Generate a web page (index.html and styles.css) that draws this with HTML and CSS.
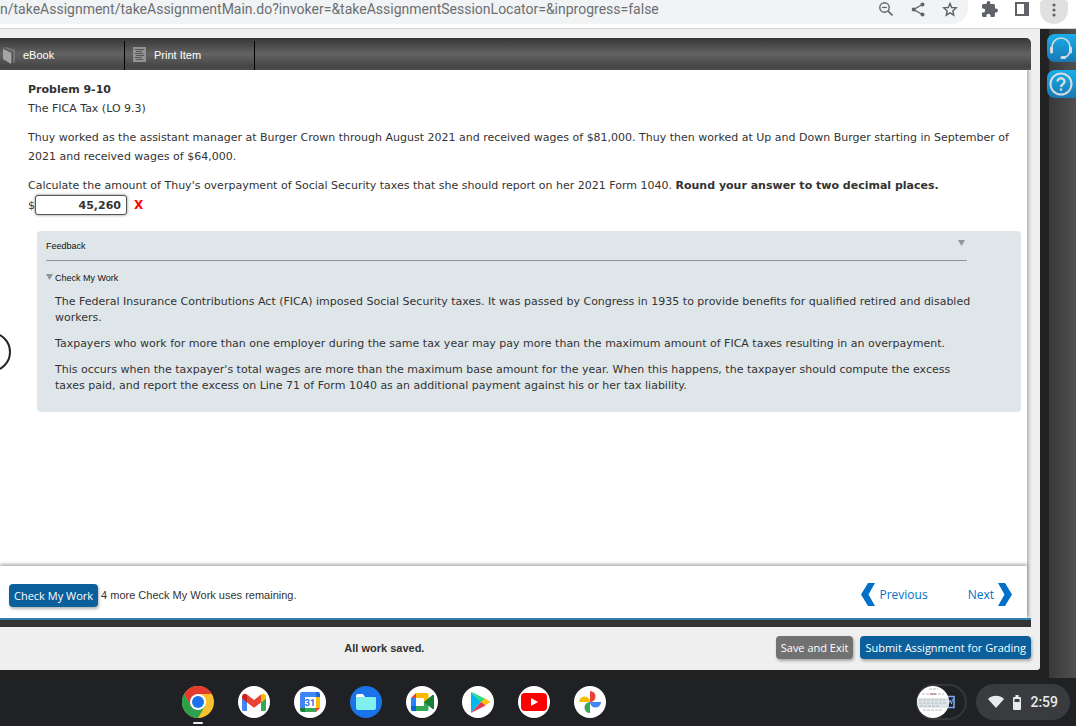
FILE: index.html
```html
<!DOCTYPE html>
<html lang="en">
<head>
    <meta charset="UTF-8">
    <meta name="viewport" content="width=device-width, initial-scale=1.0">
    <title>Problem 9-10</title>
    <link rel="stylesheet" href="styles.css">
</head>
<body>
    <header class="browser-bar">
        <div class="address">
            <input type="text" class="url" aria-label="Address" value="n/takeAssignment/takeAssignmentMain.do?invoker=&amp;takeAssignmentSessionLocator=&amp;inprogress=false">
            <button type="button" class="icon-button" aria-label="Zoom">
                <svg width="16" height="16" viewBox="0 0 16 16" fill="none" stroke="#5f6368"><circle cx="6.5" cy="6.5" r="4.7" stroke-width="1.4"/><path d="M10 10l4.500 4.500" stroke-width="1.700"/><path d="M4 6.500h5" stroke-width="1.200"/></svg>
            </button>
            <button type="button" class="icon-button" aria-label="Share">
                <svg width="16" height="16" viewBox="0 0 16 16" fill="#5f6368"><path d="M12.500 3.500L3.500 8.500l9 5" fill="none" stroke="#5f6368" stroke-width="1.400"/><circle cx="12.500" cy="3.500" r="2"/><circle cx="3.700" cy="8.500" r="2"/><circle cx="12.500" cy="13.500" r="2"/></svg>
            </button>
            <button type="button" class="icon-button" aria-label="Bookmark">
                <svg width="16" height="16" viewBox="0 0 16 16" fill="none" stroke="#5f6368" stroke-width="1.400"><path d="M8 2.500l1.700 4 4.500.4-3.400 3 1 4.300L8 11.900l-3.800 2.300 1-4.300-3.400-3 4.500-.4z"/></svg>
            </button>
        </div>
        <div class="browser-actions">
            <button type="button" class="icon-button" aria-label="Extensions">
                <svg width="16" height="16" viewBox="2 1 21 21" fill="#5f6368"><path d="M20.500 11H19V7c0-1.100-.9-2-2-2h-4V3.500a2.500 2.500 0 0 0-5 0V5H4c-1.100 0-2 .9-2 2v3.800h1.500c1.490 0 2.700 1.210 2.700 2.700s-1.210 2.700-2.700 2.700H2V20c0 1.100.9 2 2 2h3.800v-1.500c0-1.490 1.210-2.700 2.700-2.700s2.700 1.210 2.700 2.700V22H17c1.100 0 2-.9 2-2v-4h1.500a2.500 2.500 0 0 0 0-5z"/></svg>
            </button>
            <button type="button" class="icon-button" aria-label="Side panel">
                <svg width="16" height="16" viewBox="0 0 16 16"><path d="M1 1h14v14H1z" fill="#5f6368"/><path d="M3 3h7v10H3z" fill="#fff"/></svg>
            </button>
            <button type="button" class="icon-button menu-button" aria-label="Menu">
                <svg width="16" height="16" viewBox="0 0 16 16" fill="#5f6368"><circle cx="8" cy="4" r="1.600"/><circle cx="8" cy="9" r="1.600"/><circle cx="8" cy="14" r="1.600"/></svg>
            </button>
        </div>
    </header>

    <div class="workspace">
        <div class="app">
            <nav class="toolbar">
                <a href="#" class="tool">
                    <svg width="15" height="18" viewBox="0 0 15 18"><path d="M3 2.500l3-1.500 9 3v12l-2 1-2-1z" fill="#777"/><path d="M3 3l8 4v11l-8-5z" fill="#a5a5a5"/><path d="M4.500 2.500L12.500 6v10.500" fill="none" stroke="#4a4a4a"/></svg>
                    <span>eBook</span>
                </a>
                <a href="#" class="tool">
                    <svg width="13" height="15" viewBox="0 0 13 15"><path d="M0 0h13v15H0z" fill="#929292"/><path d="M2 2.500h9M3 4.500h6M2 6.500h8M3 8.500h8M2 10.500h7M3 12.500h7" stroke="#555"/></svg>
                    <span>Print Item</span>
                </a>
            </nav>

            <div class="sheet">
                <main class="problem">
                    <h1>Problem 9-10</h1>
                    <p class="topic">The FICA Tax (LO 9.3)</p>
                    <p>Thuy worked as the assistant manager at Burger Crown through August 2021 and received wages of $81,000. Thuy then worked at Up and Down Burger starting in September of 2021 and received wages of $64,000.</p>
                    <p class="question"><label for="answer">Calculate the amount of Thuy's overpayment of Social Security taxes that she should report on her 2021 Form 1040. <strong>Round your answer to two decimal places.</strong></label></p>
                    <div class="answer-row">
                        <span>$</span>
                        <input type="text" id="answer" class="answer" value="45,260">
                        <strong class="wrong">X</strong>
                    </div>

                    <section class="feedback">
                        <button type="button" class="feedback-title">
                            <span>Feedback</span>
                            <svg width="7" height="6" viewBox="0 0 7 6"><path d="M0 0h7L3.500 6z" fill="#8d9699"/></svg>
                        </button>
                        <button type="button" class="feedback-toggle">
                            <svg width="7" height="6" viewBox="0 0 7 6"><path d="M0 0h7L3.500 6z" fill="#8d9699"/></svg>
                            <span>Check My Work</span>
                        </button>
                        <div class="feedback-text">
                            <p>The Federal Insurance Contributions Act (FICA) imposed Social Security taxes. It was passed by Congress in 1935 to provide benefits for qualified retired and disabled workers.</p>
                            <p>Taxpayers who work for more than one employer during the same tax year may pay more than the maximum amount of FICA taxes resulting in an overpayment.</p>
                            <p>This occurs when the taxpayer's total wages are more than the maximum base amount for the year. When this happens, the taxpayer should compute the excess taxes paid, and report the excess on Line 71 of Form 1040 as an additional payment against his or her tax liability.</p>
                        </div>
                    </section>
                    <button type="button" class="drawer-handle" aria-label="Open panel"></button>
                </main>

                <div class="check-bar">
                    <button type="button" class="button">Check My Work</button>
                    <span class="uses">4 more Check My Work uses remaining.</span>
                    <a href="#" class="step">
                        <svg width="14" height="23" viewBox="0 0 14 23"><path d="M7 0h7L7.500 11.500 14 23H7L0 11.500z" fill="#0070c9"/></svg>
                        <span>Previous</span>
                    </a>
                    <a href="#" class="step">
                        <span>Next</span>
                        <svg width="14" height="23" viewBox="0 0 14 23"><path d="M7 0H0l6.500 11.500L0 23h7l7-11.500z" fill="#0070c9"/></svg>
                    </a>
                </div>
            </div>
            <div class="divider"></div>

            <footer class="save-bar">
                <strong class="saved">All work saved.</strong>
                <button type="button" class="button button-grey">Save and Exit</button>
                <button type="button" class="button">Submit Assignment for Grading</button>
            </footer>
        </div>

        <aside class="rail">
            <button type="button" class="help-button" aria-label="Support">
                <svg width="24" height="24" viewBox="0 0 24 24" fill="none" stroke="#d5dde2" stroke-width="1.600"><path d="M3 14V11a9 9 0 0 1 18 0v3c0 4-2 6.500-6 7.500"/><path d="M2.500 12v4M21.500 12v4" stroke-width="3" stroke-linecap="round"/><path d="M13 21.500h2.500" stroke-width="3" stroke-linecap="round"/></svg>
            </button>
            <button type="button" class="help-button" aria-label="Help">
                <svg width="24" height="24" viewBox="0 0 24 24" fill="none" stroke="#d5dde2" stroke-width="2"><circle cx="12" cy="12" r="10.500"/><path d="M8.500 9.500a3.500 3.200 0 1 1 5.500 2.600c-1.300.9-2 1.300-2 2.900" stroke-width="2.400"/><path d="M12 16.500v2.200" stroke-width="2.400"/></svg>
            </button>
        </aside>
    </div>

    <div class="shelf">
        <button type="button" class="launcher running" aria-label="Chrome">
            <svg width="32" height="32" viewBox="0 0 32 32"><circle cx="16" cy="16" r="16" fill="#fbc02d"/><path d="M16 8h13.860A16 16 0 0 0 2.140 8L9 20z" fill="#e33b2e"/><path d="M2.140 8A16 16 0 0 0 16 32l7-12-7-4-7 4z" fill="#2da04e"/><circle cx="16" cy="16" r="8" fill="#fff"/><circle cx="16" cy="16" r="6" fill="#1a73e8"/></svg>
        </button>
        <button type="button" class="launcher" aria-label="Gmail">
            <svg width="32" height="32" viewBox="0 0 32 32"><circle cx="16" cy="16" r="16" fill="#fff"/><path d="M4 12l5 4v9H5.500A1.500 1.500 0 0 1 4 23.500z" fill="#4285f4"/><path d="M28 12l-5 4v9h3.500a1.500 1.500 0 0 0 1.500-1.500z" fill="#34a853"/><path d="M23 8.500c2-1.700 5-.5 5 2.500v1.500L23 16.500z" fill="#fbbc04"/><path d="M4 12.500V11c0-3 3-4.200 5-2.500v8z" fill="#c5221f"/><path d="M9 8.500l7 5.500 7-5.500v8l-7 5.300-7-5.300z" fill="#ea4335"/></svg>
        </button>
        <button type="button" class="launcher" aria-label="Calendar">
            <svg width="32" height="32" viewBox="0 0 32 32"><circle cx="16" cy="16" r="16" fill="#fff"/><path d="M8 6h14v5H11v11H6V8a2 2 0 0 1 2-2z" fill="#4285f4"/><path d="M22 6h2a2 2 0 0 1 2 2v3h-4z" fill="#1967d2"/><path d="M22 11h4v11h-4z" fill="#fbbc04"/><path d="M11 22h11v4H11z" fill="#34a853"/><path d="M6 22h5v4H8a2 2 0 0 1-2-2z" fill="#188038"/><path d="M22 22h4l-4 4z" fill="#ea4335"/><text x="16" y="19.500" class="calendar-day">31</text></svg>
        </button>
        <button type="button" class="launcher" aria-label="Files">
            <svg width="32" height="32" viewBox="0 0 32 32"><circle cx="16" cy="16" r="16" fill="#1a73e8"/><path d="M6 10a2 2 0 0 1 2-2h5l2 3h9v4H6z" fill="#fff"/><path d="M6 11h19a1 1 0 0 1 1 1v10a2 2 0 0 1-2 2H8a2 2 0 0 1-2-2z" fill="#80f0ef"/></svg>
        </button>
        <button type="button" class="launcher" aria-label="Meet">
            <svg width="32" height="32" viewBox="0 0 32 32"><circle cx="16" cy="16" r="16" fill="#fff"/><path d="M5 12h5v8H5z" fill="#2684fc"/><path d="M10 7v5H5z" fill="#ea4335"/><path d="M5 20h5v5H6.500A1.500 1.500 0 0 1 5 23.500z" fill="#0066da"/><path d="M10 7h11a1.500 1.500 0 0 1 1.500 1.500V14L18 16v-4h-8z" fill="#ffba00"/><path d="M10 20h8v-4l4.500-2v9.500A1.500 1.500 0 0 1 21 25H10z" fill="#34a853"/><path d="M18 16l8.500-7H28v14h-1.500z" fill="#188038"/></svg>
        </button>
        <button type="button" class="launcher" aria-label="Play Store">
            <svg width="32" height="32" viewBox="0 0 32 32"><circle cx="16" cy="16" r="16" fill="#fff"/><path d="M9 6l10 10L9 27z" fill="#00b8f1"/><path d="M9 5.500l14.500 7.500L19 16.500z" fill="#2ddc7b"/><path d="M23 12.500l5.500 3.500-5.500 3.500-4-3.500z" fill="#ffc107"/><path d="M19 16l4.500 3.500L9 27z" fill="#e5394f"/></svg>
        </button>
        <button type="button" class="launcher" aria-label="YouTube">
            <svg width="32" height="32" viewBox="0 0 32 32"><circle cx="16" cy="16" r="16" fill="#fff"/><rect x="3" y="7" width="26" height="18" rx="4" fill="#f00"/><path d="M13 12l7 4-7 4z" fill="#fff"/></svg>
        </button>
        <button type="button" class="launcher" aria-label="Photos">
            <svg width="32" height="32" viewBox="0 0 32 32"><circle cx="16" cy="16" r="16" fill="#fff"/><path d="M16 5a5.500 5.500 0 0 1 0 11z" fill="#ea4335"/><path d="M27 16a5.500 5.500 0 0 1-11 0z" fill="#4285f4"/><path d="M16 27a5.500 5.500 0 0 1 0-11z" fill="#34a853"/><path d="M5 16a5.500 5.500 0 0 1 11 0z" fill="#fbbc04"/></svg>
        </button>

        <button type="button" class="recent" aria-label="Recent files">
            <svg width="52" height="36" viewBox="0 0 52 36"><rect x="1" y="1" width="49" height="34" rx="17" fill="#202124" stroke="#35363a" stroke-width="2"/><path d="M28 12.500h10v11H28z" fill="none" stroke="#7baaf7" stroke-width="1.600"/><path d="M31 15l1.500 5 1.500-4 1.500 4 1-5" fill="none" stroke="#7baaf7"/><circle cx="17" cy="18" r="16" fill="#fff"/><path d="M1.500 14h31v9a16 16 0 0 1-.5 1H2.500a16 16 0 0 1-1-10z" fill="#dfe6e9"/><path d="M13 5h9M6 10h22M3 16h26M3 19h28M4 22h20M7 26h20" stroke="#b3bbc0" stroke-dasharray="3 1"/><path d="M14 10h6" stroke="#a66"/></svg>
        </button>
        <button type="button" class="status">
            <svg width="16" height="14" viewBox="0 0 16 14"><path d="M8 13L0 4a11.500 11.500 0 0 1 16 0z" fill="#e8eaed"/></svg>
            <svg width="8" height="15" viewBox="0 0 8 15"><path d="M2.500 0h3v2H7a1 1 0 0 1 1 1v11a1 1 0 0 1-1 1H1a1 1 0 0 1-1-1V3a1 1 0 0 1 1-1h1.500z" fill="#e8eaed"/><path d="M1.500 4h5v3h-5z" fill="#3c3d40"/></svg>
            <span>2:59</span>
        </button>
    </div>
</body>
</html>
```
FILE: styles.css
```css
/* Reset and base styles */
* {
    margin: 0;
    padding: 0;
    box-sizing: border-box;
}

body {
    display: flex;
    flex-direction: column;
    min-height: 100vh;
    background-color: #202124;
    color: #333;
    font-family: 'DejaVu Sans', Verdana, sans-serif;
    font-size: 11px;
    overflow-x: hidden;
}

button {
    border: none;
    background: none;
    font: inherit;
    color: inherit;
    cursor: pointer;
}

a {
    text-decoration: none;
}

svg {
    display: block;
    flex: none;
}

/* Browser bar */
.browser-bar {
    display: flex;
    height: 29px;
    background-color: #fff;
    border-bottom: 1px solid #d5d5d5;
}

.address {
    flex: 1;
    display: flex;
    gap: 16px;
    height: 24px;
    padding-right: 10px;
    background-color: #f1f3f4;
    border-radius: 0 0 16px 0;
}

.url {
    flex: 1;
    min-width: 0;
    height: 18px;
    border: none;
    background: none;
    color: #6b6f73;
    font-family: Roboto, sans-serif;
    font-size: 14px;
}

.icon-button {
    height: 18px;
}

.browser-actions {
    display: flex;
    gap: 16px;
    padding: 0 8px 0 14px;
}

.menu-button {
    width: 28px;
    height: 24px;
    margin-left: -6px;
    padding: 0 6px 6px;
    border-radius: 4px 4px 14px 14px;
    background-color: #e0e0e0;
}

/* Page area */
.workspace {
    flex: 1;
    display: flex;
    gap: 9px;
    background-color: #222;
}

.app {
    flex: 1;
    display: flex;
    flex-direction: column;
    margin-bottom: 8px;
    padding: 9px 9px 0 0;
    background-color: #efefef;
    border-radius: 0 0 3px 0;
}

.toolbar {
    display: flex;
    height: 32px;
    padding-top: 3px;
    background: linear-gradient(#363636, #636363 50%, #444 90%, #555);
    border-radius: 0 5px 0 0;
}

.tool {
    display: flex;
    align-items: center;
    gap: 8px;
    width: 130px;
    padding: 0 0 2px 8px;
    border-right: 1px solid #000;
    color: #fff;
    font-family: 'Liberation Sans', Arial, sans-serif;
}

.tool:first-child {
    width: 125px;
    padding-left: 0;
}

.sheet {
    flex: 1;
    display: flex;
    flex-direction: column;
    margin-right: 4px;
    background-color: #fff;
    box-shadow: 2px 0 3px rgba(0, 0, 0, 0.25);
}

.problem {
    position: relative;
    flex: 1;
    padding: 10px 6px 10px 28px;
    line-height: 19px;
}

.problem h1 {
    font-size: 11px;
}

.problem p {
    margin-bottom: 10px;
}

.problem .question {
    margin-bottom: 0;
}

.answer-row {
    display: flex;
    align-items: center;
    height: 20px;
    margin-bottom: 16px;
}

.answer {
    width: 92px;
    height: 20px;
    padding: 0 5px;
    border: 1px solid #555;
    border-radius: 3px;
    box-shadow: 0 0 3px rgba(0, 0, 0, 0.5);
    color: #333;
    font: bold 11px 'DejaVu Sans', Verdana, sans-serif;
    text-align: right;
}

.wrong {
    margin-left: 7px;
    color: #f00;
    font-size: 12px;
}

/* Feedback */
.feedback {
    margin-left: 9px;
    padding: 5px 54px 8px 9px;
    background-color: #dfe6e9;
    border-radius: 4px;
}

.feedback-title,
.feedback-toggle {
    display: flex;
    width: 100%;
    color: #111;
    font-family: 'Liberation Sans', Arial, sans-serif;
    font-size: 9px;
    line-height: 20px;
}

.feedback-title {
    justify-content: space-between;
    height: 25px;
    margin-bottom: 7px;
    padding-right: 2px;
    border-bottom: 1px solid #8d9699;
}

.feedback-title svg {
    margin-top: 4px;
}

.feedback-toggle {
    gap: 2px;
    margin-bottom: 6px;
}

.feedback-toggle svg {
    margin-top: 6px;
}

.feedback-text {
    margin-right: -12px;
    padding-left: 9px;
    line-height: 16px;
}

.drawer-handle {
    position: absolute;
    top: 262px;
    left: -29px;
    width: 40px;
    height: 40px;
    background-color: #fff;
    border: 2px solid #222;
    border-radius: 50%;
}

/* Check bar */
.check-bar {
    display: flex;
    align-items: center;
    height: 52px;
    padding: 6px 15px 0 9px;
    background-color: #fff;
    box-shadow: 0 -2px 3px rgba(0, 0, 0, 0.3);
    font-family: 'Liberation Sans', Arial, sans-serif;
}

.button {
    height: 23px;
    padding: 0 5px;
    background-color: #0b5f9b;
    border-radius: 4px;
    box-shadow: 1px 2px 3px rgba(0, 0, 0, 0.3);
    color: #fff;
    font-family: 'Open Sans', sans-serif;
    font-size: 11px;
    white-space: nowrap;
}

.button-grey {
    background-color: #717171;
}

.uses {
    margin: 0 auto 0 3px;
}

.step {
    display: flex;
    align-items: center;
    gap: 4px;
    margin-left: 40px;
    padding-bottom: 2px;
    color: #0070c9;
    font-family: 'Open Sans', sans-serif;
    font-size: 12px;
}

.divider {
    height: 9px;
    background-color: #333;
    border-top: 2px solid #2f7fae;
}

.save-bar {
    display: flex;
    align-items: center;
    gap: 7px;
    height: 43px;
    padding-bottom: 2px;
    font-family: 'Liberation Sans', Arial, sans-serif;
}

.saved {
    flex: 1;
    text-align: center;
}

/* Help rail */
.rail {
    display: flex;
    flex-direction: column;
    gap: 8px;
    width: 27px;
    padding-top: 5px;
    background: linear-gradient(to right, #383838, #505050);
}

.help-button {
    width: 29px;
    height: 28px;
    margin-left: -2px;
    padding: 0 2px;
    background: linear-gradient(#18aeea, #1878b4);
    border-radius: 8px 0 0 8px;
}

/* Shelf */
.shelf {
    display: flex;
    align-items: center;
    gap: 24px;
    height: 48px;
    padding: 0 6px 0 182px;
}

.launcher {
    position: relative;
    width: 32px;
    height: 32px;
}

.running::after {
    content: "";
    position: absolute;
    bottom: -6px;
    left: 11px;
    width: 10px;
    height: 2px;
    border-radius: 1px;
    background-color: #e8eaed;
}

.calendar-day {
    fill: #1a73e8;
    font: bold 9px Roboto, sans-serif;
    text-anchor: middle;
}

.recent {
    margin: 0 -16px 0 auto;
}

.status {
    display: flex;
    align-items: center;
    gap: 9px;
    height: 36px;
    padding: 0 12px;
    border-radius: 18px;
    background-color: #3a3b3e;
    color: #e8eaed;
    font: 500 14px Roboto, sans-serif;
}
```
